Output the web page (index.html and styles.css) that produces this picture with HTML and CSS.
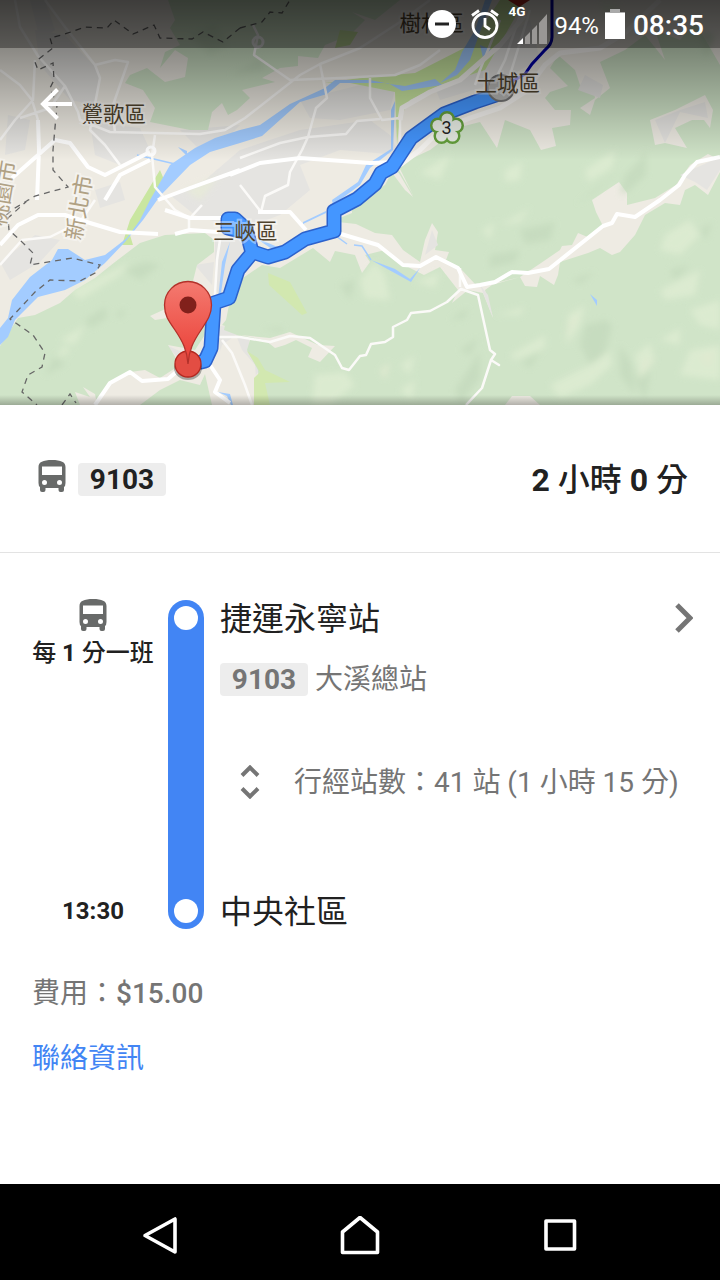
FILE: index.html
```html
<!DOCTYPE html>
<html lang="zh-Hant">
<head>
    <meta charset="utf-8">
    <title>9103</title>
    <link rel="stylesheet" href="styles.css">
</head>
<body>
    <div class="map">
        <svg class="map-canvas" width="720" height="405" viewBox="0 0 720 405">
            <defs>
                <filter id="soft"><feGaussianBlur stdDeviation="3"/></filter>
                <linearGradient id="pin" x1="0" y1="0" x2="0" y2="1">
                    <stop offset="0" stop-color="#f47a70"/>
                    <stop offset="1" stop-color="#ea3e35"/>
                </linearGradient>
            </defs>
            <rect width="720" height="405" fill="#eeebe3"/>
            <!-- built up areas -->
            <g fill="#e5e4e1">
                <path d="M35 30L65 35L100 72L95 105L70 100L40 65ZM8 115L30 120L25 150L5 155ZM90 122L140 128L150 150L120 165L95 155ZM95 190L120 182L125 200L100 208ZM0 262L35 235L60 240L40 262L10 280ZM170 195L205 180L240 150L300 130L370 120L390 135L400 155L340 150L300 165L310 190L280 215L240 230L195 215Z"/>
                <path d="M300 100L360 85L395 90L390 110L340 120L310 118ZM430 75L500 40L530 20L540 60L490 85L440 100ZM215 240L250 235L240 270L225 300L215 290ZM215 325L245 330L260 370L240 395L225 370ZM195 265L214 262L212 285ZM166 345L182 352L178 358Z"/>
                <path d="M205 10L225 0L245 20L220 30ZM30 0L45 0L55 30L40 40ZM180 130L240 125L230 135L200 150ZM345 225L365 225L375 240L350 238Z"/>
            </g>
            <!-- hills -->
            <g fill="#d0e4c8">
                <path d="M168 0L175 20L170 28L180 45L165 52L160 68L175 50L188 58L185 77L165 82L147 68L130 75L125 83L143 90L155 108L150 122L190 130L208 130L212 112L222 103L228 115L237 110L250 98L242 90L275 82L262 78L280 68L298 66L298 56L318 58L325 45L350 35L365 20L352 12L375 20L400 0Z"/>
                <path d="M0 346L18 318L35 315L60 303L75 290L95 278L115 262L140 243L165 235L205 233L214 240L214 252L197 265L192 285L185 300L150 316L155 320L205 312L208 330L195 350L168 345L180 365L160 378L145 370L130 372L110 382L97 405L95 394L83 387L90 397L75 392L80 405H0Z"/>
                <path d="M430 150L460 127L480 122L497 148L505 120L530 130L541 150L556 146L552 128L570 125L571 110L555 110L545 98L550 92L568 86L550 68L558 55L575 70L580 85L592 80L595 98L580 108L590 115L595 100L610 88L600 62L625 50L645 35L665 60L655 30L680 40L695 22L720 65V405H260L258 370L247 350L250 340L224 330L230 300L240 280L262 265L280 268L313 248L330 262L335 251L355 255L362 273L370 262L355 240L335 228L330 222L352 213L352 203L385 185L396 165L413 195L398 165Z"/>
                <path d="M140 405L160 390L180 380L200 385L205 374L212 405ZM222 325L240 303L238 330Z"/>
            </g>
            <g fill="#eeebe3">
                <path d="M393 165L400 175L413 197L405 190L390 170ZM338 222L356 224L375 233L392 235L403 250L420 262L425 240L432 223L438 232L435 250L449 252L446 260L460 268L475 284L500 282L520 277L541 263L560 250L562 246L572 245L578 233L590 238L603 226L596 212L592 200L619 182L627 193L627 205L655 198L676 185L690 165L708 154L720 160V172L708 195L695 185L685 190L680 205L665 203L645 215L635 235L620 252L612 255L600 248L588 253L560 262L558 275L554 285L540 276L537 287L525 286L520 277L492 285L485 290L493 318L483 293L468 290L452 303L458 290L440 267L424 275L410 268L385 250L365 255L345 240Z"/>
                <path d="M240 335L270 338L290 332L318 345L335 346L320 362L308 357L312 348L296 340L285 345L275 348L265 340ZM236 335L242 350L255 365L258 405H230L215 370L222 345ZM505 405H540L530 396H512ZM650 120L675 110L705 95L713 110L710 128L704 120L692 120L675 128L687 148L665 143L655 145Z"/>
            </g>
            <g fill="#e5e4e1"><path d="M432 230L438 245L425 255ZM655 120L680 110L705 102L708 118L680 112L665 143ZM680 175L720 157V170L707 190L695 182ZM585 75L603 85L600 98L578 90ZM480 285L488 295L493 318Z"/></g>
            <path fill="#c9e6a0" d="M160 170L165 182L143 217L130 235L133 245L122 245L130 220ZM325 83L360 78L415 73L470 45L500 0H525L485 70L440 85L410 100L400 118L397 145L395 92L345 82ZM340 30L358 32L350 45L335 48Z"/>
            <path fill="#d2e8b0" d="M268 273L290 282L307 313L302 315L269 285ZM247 351L258 358L265 370L290 382L265 383L270 405H254V378L260 372Z"/>
            <!-- terrain shading -->
            <g filter="url(#soft)" opacity=".65">
                <path fill="#c2d8bb" d="M124 270L145 262L160 265L140 280ZM85 320L105 307L107 318L90 328ZM115 315L125 308L122 318ZM520 230L555 222L550 240L525 244ZM490 255L520 250L515 262L490 268ZM572 280L595 272L580 284ZM580 345L585 325L605 320L612 325L605 355L590 365ZM620 195L625 175L640 160L646 150V175L630 190ZM575 205L620 170L595 192ZM700 30L715 35L705 60ZM522 362L540 352L530 368ZM620 345L632 365L635 395L620 375ZM340 285L355 280L350 300ZM450 320L468 308L465 318ZM460 350L478 338L470 355ZM455 390L480 352V378L460 405ZM700 230L712 222L706 240ZM670 270L690 265L675 280ZM190 35L215 25L230 45L210 55ZM230 75L260 60L265 70ZM640 360L650 375L645 400L635 380ZM45 375L55 355L65 365ZM262 328L285 328L280 332Z"/>
                <path fill="#e2efd5" d="M360 280L375 262L385 275L390 300L365 298ZM415 282L440 272L435 288ZM568 315L585 305L580 325L567 345ZM315 375L345 372L355 385L330 405H312ZM400 365L415 355L410 375ZM510 355L545 335L545 348L515 360ZM550 385L590 365L610 350L612 365L590 385L560 398ZM635 355L650 343L655 360L640 380ZM665 235L690 220L700 235L680 255L660 250ZM660 290L700 270L695 295L665 300ZM690 310L720 300V330L700 325ZM505 170L522 162L520 180L505 182ZM585 170L615 150L612 168L588 182ZM70 290L130 262L120 275L80 300ZM60 340L85 325L75 345ZM55 358L65 345L70 352ZM500 225L530 208L520 222ZM495 315L525 307L520 315ZM420 173L450 155L440 180ZM600 0L620 5L605 20ZM680 375L690 350L720 345V380ZM400 390L415 380L412 400ZM660 340L680 328L680 345ZM482 230L495 222L490 240Z"/>
                <path fill="#e8edd5" d="M640 375L643 362L655 358ZM380 370L390 362L385 380ZM700 355L716 352L708 366ZM565 340L570 320L580 315ZM185 190L220 175L200 200Z"/>
            </g>
            <!-- water -->
            <g fill="#a3ccff">
                <path d="M240 130V143L210 152L190 165L160 196L143 220L125 242L105 263L85 280L65 290L38 297L15 320L8 337L0 345V328L8 318L12 300L30 277L52 260L58 249H68L85 260L105 255L127 238L140 220L150 200L170 165L195 148L215 138ZM240 130L260 125L290 104L325 88L335 80H370L390 84L405 86L435 79L442 85L402 91L388 83L340 83L327 94L300 102L262 136L240 143Z"/>
                <path d="M440 83L455 70L462 52L475 30L485 0H492L480 32L470 60L457 75ZM480 45L492 50L483 58ZM178 147L187 151L187 156ZM391 110L395 101L393 150L370 168L360 185L333 205L332 200L358 182L366 165L391 149ZM590 294L597 300V306ZM303 222L326 211V213L303 224ZM254 237L280 248L272 249ZM371 260L395 269L410 279L420 268L411 282ZM230 242L225 265L220 300L218 299L222 262ZM218 392L230 394L233 405H231L227 396Z"/>
            </g>
            <path d="M137 155L175 164M336 236L347 244M354 245L362 246L371 260" fill="none" stroke="#a3ccff" stroke-width="1.5"/>
            <!-- roads -->
            <g fill="none" stroke="#fff" stroke-linejoin="round">
                <path stroke-width="2.500" stroke="#fbfaf8" d="M15 0L20 27L38 56L65 86L78 112L80 120L110 132L200 134L225 130L245 118L300 75L320 64L360 48L400 22L430 0M45 0L65 27L95 65L100 78L95 104L90 130L105 145L120 165M95 65L115 60L128 62L112 108L115 132M0 70L20 85L32 100L38 120M35 60L33 100L15 120L0 140M65 86L50 108L20 118M155 135L152 155L155 187L175 210L190 218L202 205M253 25L258 35L254 55L290 80L340 78L395 75L420 65L440 50M320 64L327 98L316 108L308 137L302 150L290 172L288 185L265 196L261 212L240 185M370 78V98L382 120L400 118L400 145M380 119L357 121L346 134L308 137L280 143L240 158M0 265L22 240L50 237L80 222L95 200M189 217V231M220 240L217 260L212 345M217 337H240L270 342L290 336L310 338L335 355L342 368L349 370L360 356L366 355L371 344L385 342L393 337L393 327L407 320L411 313L430 311L447 302L461 289L478 295L490 350L495 354L491 360L499 365L491 360L482 388L466 405M460 268V287M222 340L232 353L245 385L252 405M500 20L480 70L475 85M520 15L505 60L495 80M530 10L510 75"/>
                <path stroke-width="4" d="M0 245L18 225L38 215L65 215L90 223L120 232L158 234M12 178L55 140L70 143L88 167L105 175L150 152M38 120L39 150L37 200M165 210L190 218H222M175 234L190 230L218 232M258 212L290 212L306 230M158 200L190 188L240 170M230 175L260 163L300 158L370 163L400 162M95 405L110 383L130 372L142 381L168 379L190 360M212 345L210 365L220 380L215 392L230 403M720 157L697 162L685 175L679 185L660 200L635 217L617 214L612 223L603 226L549 269L528 273L512 272L495 282L480 285L467 287L458 268L436 257L420 266L403 265L378 245L341 234M105 200L120 175L150 160"/>
                <path stroke-width="5" stroke="#f7f5f2" d="M400 165L420 150L440 130L470 118L500 108L525 92L545 65L560 53L600 48L625 33L660 0M400 120L402 108L430 92L460 80L500 45L525 15"/>
                <circle cx="151" cy="151" r="4" stroke-width="3"/>
                <circle cx="258" cy="42" r="5" stroke-width="3"/>
            </g>
            <path class="boundary" d="M240 28L223 42L203 32L192 39L160 38L154 25L133 34L114 20L107 28L85 27L65 34L50 38L53 48L35 62L38 70L53 63L54 80L50 88L57 105L53 150V170L68 187L35 196L15 208L0 220M28 200L8 218L9 230L20 240L33 253L30 265L72 258L100 265L95 273L80 281L50 280L35 292L10 319L33 335L45 353L42 367L28 375L22 392L37 405M62 405L70 394L76 403M240 28L262 22L270 12L282 13L290 0"/>
            <path fill="none" stroke="#0000a5" stroke-width="3" d="M552 0V37C552 44 548 47 544 51L532 64L525 74"/>
            <path fill="none" stroke="#7670f0" stroke-width="3" d="M525 74L513 81"/>
            <path fill="#b22a22" d="M508 0H530L519 7Z"/>
            <!-- bus route -->
            <g fill="none" stroke-linejoin="round" stroke-linecap="round">
                <path stroke="#2c62cc" stroke-width="15" d="M502 93L475 102L444 114L411 138L392 167L381 173L375 184L357 199L334 211V231L305 239L285 252L268 257L253 252L238 270L229 298L214 303L211 348L205 361L201 362M228 220L228 228L243 232M228 219L235 219L246 229L252 252"/>
                <path stroke="#4496ff" stroke-width="12" d="M502 93L475 102L444 114L411 138L392 167L381 173L375 184L357 199L334 211V231L305 239L285 252L268 257L253 252L238 270L229 298L214 303L211 348L205 361L201 362M228 220L228 228L243 232M228 219L235 219L246 229L252 252"/>
            </g>
            <circle cx="501" cy="88" r="13" fill="#b8b8b6" stroke="#777" stroke-width="2"/>
            <g fill="#e9eee6" stroke="#65a13c" stroke-width="3">
                <circle cx="447" cy="119" r="6.500"/><circle cx="456" cy="125.500" r="6.500"/><circle cx="452.500" cy="136" r="6.500"/><circle cx="441.500" cy="136" r="6.500"/><circle cx="438" cy="125.500" r="6.500"/>
            </g>
            <g fill="#e9eee6"><circle cx="447" cy="119" r="5.500"/><circle cx="456" cy="125.500" r="5.500"/><circle cx="452.500" cy="136" r="5.500"/><circle cx="441.500" cy="136" r="5.500"/><circle cx="438" cy="125.500" r="5.500"/><circle cx="447" cy="128.500" r="8.500"/></g>
            <text x="441.500" y="134" font-size="18" fill="#222">3</text>
            <!-- place names -->
            <text class="place" x="399.500" y="31">樹林區</text>
            <text class="place" x="81.500" y="122">鶯歌區</text>
            <text class="place" x="475.500" y="91">土城區</text>
            <text class="place" x="213" y="239">三峽區</text>
            <text class="place city" transform="translate(81 241) rotate(-80)">新北市</text>
            <text class="place city" transform="translate(5 227) rotate(-80)">桃園市</text>
            <!-- destination -->
            <ellipse cx="188" cy="368" rx="14" ry="12" fill="#000" opacity=".3"/>
            <circle cx="188" cy="364" r="13" fill="#e34d43" stroke="#b3271f" stroke-width="1.3"/>
            <path fill="url(#pin)" stroke="#b3312a" stroke-width="1.3" d="M188 364C187 350 183 342 175 330C168 320 164.500 315 164.500 305A23.500 23.500 0 0 1 211.500 305C211.500 315 207 321 201 330C193 342 189 350 188 364Z"/>
            <circle cx="188" cy="305" r="8.500" fill="#81201b"/>
        </svg>
        <div class="map-shade"></div>
        <div class="status-bar">
            <svg class="dnd" width="28" height="28" viewBox="0 0 28 28"><circle cx="14" cy="14" r="14" fill="#fff"/><path d="M7 14H21" stroke="#222" stroke-width="3"/></svg>
            <svg class="alarm" width="28" height="30" viewBox="0 0 28 30" fill="none" stroke="#fff" stroke-width="2.800"><circle cx="14" cy="16.500" r="12"/><path d="M14 9V17L19 20.500M1 6.500L8 1.500M27 6.500L20 1.500"/></svg>
            <div class="signal">
                <span class="network">4G</span>
                <svg width="30" height="30" viewBox="0 0 30 30"><path d="M8 30V23L13 18V30ZM15 30V16L20 11V30ZM22 30V9L30 0V30Z" fill="#999795"/><path d="M0 30L6 24V30Z" fill="#fff"/></svg>
            </div>
            <span class="percent">94%</span>
            <svg class="battery" width="20" height="30" viewBox="0 0 20 30"><path d="M5 0H15V3H20V6H0V3H5Z" fill="#aaa"/><rect y="4" width="20" height="26" fill="#fff"/></svg>
            <span class="clock">08:35</span>
        </div>
        <svg class="back" width="32" height="32" viewBox="0 0 32 32" fill="none" stroke="#fff" stroke-width="4"><path d="M32 16H3M17.500 1.500L3 16L17.500 30.500"/></svg>
    </div>

    <div class="summary">
        <svg class="bus" width="28" height="32" viewBox="0 0 28 32"><path d="M.5 7C.5 2 5 0 14 0S27.500 2 27.500 7V23Q27.500 26 26 27V30Q26 32 24 32H22.500Q20.500 32 20.500 30V28H7.500V30Q7.500 32 5.500 32H4Q2 32 2 30V27Q.5 26 .5 23ZM4 6.500V15H24V6.500ZM6.500 20A2.500 2.500 0 1 0 6.500 25A2.500 2.500 0 1 0 6.500 20ZM21.500 20A2.500 2.500 0 1 0 21.500 25A2.500 2.500 0 1 0 21.500 20Z"/></svg>
        <span class="badge">9103</span>
        <span class="duration"><b>2</b> 小時 <b>0</b> 分</span>
    </div>

    <div class="trip">
        <div class="times">
            <div class="frequency">
                <svg class="bus" width="28" height="32" viewBox="0 0 28 32"><path d="M.5 7C.5 2 5 0 14 0S27.500 2 27.500 7V23Q27.500 26 26 27V30Q26 32 24 32H22.500Q20.500 32 20.500 30V28H7.500V30Q7.500 32 5.500 32H4Q2 32 2 30V27Q.5 26 .5 23ZM4 6.500V15H24V6.500ZM6.500 20A2.500 2.500 0 1 0 6.500 25A2.500 2.500 0 1 0 6.500 20ZM21.500 20A2.500 2.500 0 1 0 21.500 25A2.500 2.500 0 1 0 21.500 20Z"/></svg>
                <span>每 <b>1</b> 分一班</span>
            </div>
            <b class="arrival">13:30</b>
        </div>
        <div class="line">
            <span class="stop"></span>
            <span class="stop"></span>
        </div>
        <div class="stations">
            <div class="station">
                <span>捷運永寧站</span>
                <svg width="18" height="30" viewBox="0 0 18 30" fill="none" stroke="#757575" stroke-width="5"><path d="M2 2L15 15L2 28"/></svg>
            </div>
            <div class="direction"><span class="badge">9103</span><span>大溪總站</span></div>
            <div class="stops">
                <svg width="20" height="34" viewBox="0 0 20 34" fill="none" stroke="#757575" stroke-width="4"><path d="M2 10.500L10 2.500L18 10.500M2 23.500L10 31.500L18 23.500"/></svg>
                <span>行經站數：41 站 (1 小時 15 分)</span>
            </div>
            <div class="station last">中央社區</div>
        </div>
    </div>

    <div class="info">
        <div>費用：<b>$15.00</b></div>
        <a class="contact">聯絡資訊</a>
    </div>

    <div class="nav-bar">
        <svg width="40" height="40" viewBox="0 0 40 40"><path d="M5 19.500L35 3V36Z"/></svg>
        <svg width="40" height="40" viewBox="0 0 40 40"><path d="M2.500 36.500V16L20 1.500L37.500 16V36.500Z"/></svg>
        <svg width="40" height="40" viewBox="0 0 40 40"><path d="M6 5H34.500V33H6Z"/></svg>
    </div>
</body>
</html>
```
FILE: styles.css
```css
* {
    box-sizing: border-box;
}
body {
    margin: 0;
    width: 720px;
    height: 1280px;
    display: flex;
    flex-direction: column;
    overflow: hidden;
    background-color: white;
    color: #212121;
    font-family: Roboto, "Noto Sans CJK TC", sans-serif;
}
svg {
    display: block;
    flex: none;
}
.map {
    position: relative;
    height: 405px;
    overflow: hidden;
}
.boundary {
    fill: none;
    stroke: #666;
    stroke-width: 1.3;
    stroke-dasharray: 6 5;
}
.place {
    font-size: 21.5px;
    fill: #4f432d;
    stroke: rgba(255, 255, 255, 0.4);
    stroke-width: 4px;
    paint-order: stroke;
}
.city {
    font-size: 22px;
    fill: #b0a184;
}
.map-shade {
    position: absolute;
    inset: 0;
    background: linear-gradient(rgba(0, 0, 0, 0.6), rgba(0, 0, 0, 0) 160px),
        linear-gradient(transparent 395px, rgba(0, 0, 0, 0.25) 405px);
}
.status-bar {
    position: absolute;
    top: 0;
    left: 0;
    width: 720px;
    height: 48px;
    padding-right: 16px;
    display: flex;
    justify-content: flex-end;
    align-items: center;
    background-color: rgba(0, 0, 0, 0.35);
    color: white;
}
.alarm {
    margin-left: 15px;
}
.signal {
    display: flex;
    align-items: flex-end;
    height: 40px;
    width: 40px;
    margin: 0 6px 0 9px;
}
.signal svg {
    margin-left: -9px;
}
.network {
    align-self: flex-start;
    font-size: 13.5px;
    font-weight: 700;
    line-height: 14px;
    width: 18px;
}
.percent {
    font-size: 24px;
    line-height: 28px;
    padding-top: 3px;
}
.battery {
    margin: 0 8px 0 6px;
}
.clock {
    font-size: 28px;
    font-weight: 500;
    line-height: 32px;
    padding-top: 3px;
}
.back {
    position: absolute;
    left: 40px;
    top: 88px;
}
.summary {
    display: flex;
    align-items: center;
    height: 148px;
    padding: 0 32px 0 38px;
    border-bottom: 1px solid #e3e3e3;
}
.bus {
    fill: #686a69;
    fill-rule: evenodd;
}
.summary .bus {
    margin-top: -5px;
}
.badge {
    width: 88px;
    height: 33px;
    border-radius: 4px;
    background-color: #ededed;
    text-align: center;
    font-size: 28px;
    font-weight: 700;
    line-height: 34px;
}
.summary .badge {
    margin: 1px 0 0 12px;
}
.duration {
    margin-left: auto;
    font-size: 32px;
    font-weight: 500;
    line-height: 40px;
    padding-top: 2px;
}
.trip {
    display: grid;
    grid-template-columns: 136px 36px 1fr;
    height: 329px;
    margin: 47px 27px 0 32px;
}
.times {
    display: flex;
    flex-direction: column;
    justify-content: space-between;
    width: 122px;
    text-align: center;
    font-size: 24px;
    font-weight: 500;
    line-height: 36px;
    white-space: nowrap;
}
.frequency {
    display: flex;
    flex-direction: column;
    align-items: center;
    gap: 4px;
    margin-top: -1px;
}
.line {
    display: flex;
    flex-direction: column;
    justify-content: space-between;
    align-items: center;
    padding: 6px 0;
    border-radius: 18px;
    background-color: #4285f4;
}
.stop {
    width: 24px;
    height: 24px;
    border-radius: 50%;
    background-color: white;
}
.stations {
    display: flex;
    flex-direction: column;
    padding-left: 16px;
    color: #757575;
    font-size: 28px;
    line-height: 36px;
    white-space: nowrap;
}
.station {
    display: flex;
    justify-content: space-between;
    align-items: center;
    height: 36px;
    line-height: 36px;
    color: #212121;
    font-size: 32px;
}
.station span,
.direction span + span,
.stops span {
    padding-top: 2px;
}
.direction {
    display: flex;
    align-items: center;
    gap: 7px;
    height: 36px;
    margin-top: 25px;
}
.direction .badge {
    line-height: 33px;
}
.stops {
    display: flex;
    align-items: center;
    gap: 34px;
    height: 36px;
    margin: 67px 0 0 20px;
}
.last {
    margin-top: auto;
    padding-top: 2px;
}
.info {
    display: flex;
    flex-direction: column;
    gap: 29px;
    padding: 47px 32px 0;
    color: #757575;
    font-size: 28px;
    line-height: 36px;
}
.info b {
    font-weight: 500;
}
.info .contact {
    color: #4285f4;
}
.nav-bar {
    display: flex;
    justify-content: center;
    align-items: center;
    gap: 160px;
    height: 96px;
    margin-top: auto;
    padding-top: 7px;
    background-color: black;
}
.nav-bar path {
    fill: none;
    stroke: white;
    stroke-width: 3.6;
    stroke-linejoin: round;
}
```
